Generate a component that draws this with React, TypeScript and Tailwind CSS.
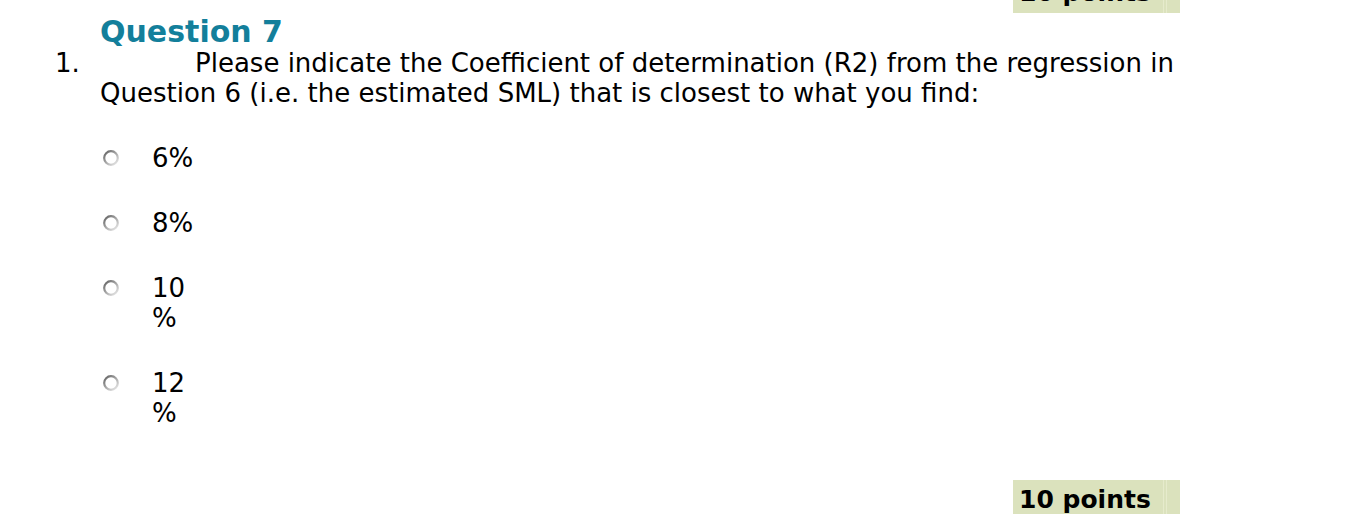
import React from 'react'

const options = ['6%', '8%', '10 %', '12 %']

const PointsBox: React.FC<{ className?: string }> = ({ className = '' }) => (
  <div className={`ml-[1013px] w-[167px] h-[40px] bg-[#dbe2bd] relative ${className}`}>
    <div className="absolute top-0 bottom-0 left-[150px] w-px bg-[#e6ebcc]" />
    <div className="absolute top-0 bottom-0 left-[153px] w-px bg-[#e6ebcc]" />
    <span className="absolute left-[6px] top-[5px] text-[25px] leading-[30px] font-bold text-black">10 points</span>
  </div>
)

// little grey radio, darker on the upper left like the old mac style
const Radio: React.FC = () => (
  <svg width="18" height="18" viewBox="0 0 18 18" className="block">
    <defs>
      <linearGradient id="rg" x1="0" y1="0" x2="0.9" y2="1">
        <stop offset="0" stopColor="#5e5e5e" />
        <stop offset="0.5" stopColor="#a4a4a4" />
        <stop offset="1" stopColor="#e8e8e8" />
      </linearGradient>
    </defs>
    <circle cx="9" cy="9" r="6.8" fill="#fff" stroke="url(#rg)" strokeWidth="2.2" />
  </svg>
)

export default function App() {
  return (
    <div className="w-[1352px] h-[514px] overflow-hidden bg-white text-black" style={{ fontFamily: '"DejaVu Sans", Verdana, sans-serif' }}>
      <PointsBox className="-mt-[27px]" />
      <h2 className="ml-[100px] mt-[2px] text-[30px] leading-[34px] font-bold text-[#137f9b]">Question 7</h2>
      <div className="-mt-[1px] flex text-[26px] leading-[30px]">
        <span className="w-[45px] ml-[55px]">1.</span>
        <p className="w-[1100px] indent-[95px]">
          Please indicate the Coefficient of determination (R2) from the regression in Question 6 (i.e. the estimated SML) that is closest to what you find:
        </p>
      </div>
      <div className="mt-[35px] ml-[102px] flex flex-col gap-[35px] text-[26px] leading-[30px]">
        {options.map((o) => (
          <div key={o} className="flex items-start">
            <div className="mt-[6px]"><Radio /></div>
            <span className="ml-[32px] w-[42px]">{o}</span>
          </div>
        ))}
      </div>
      <PointsBox className="mt-[52px]" />
    </div>
  )
}
